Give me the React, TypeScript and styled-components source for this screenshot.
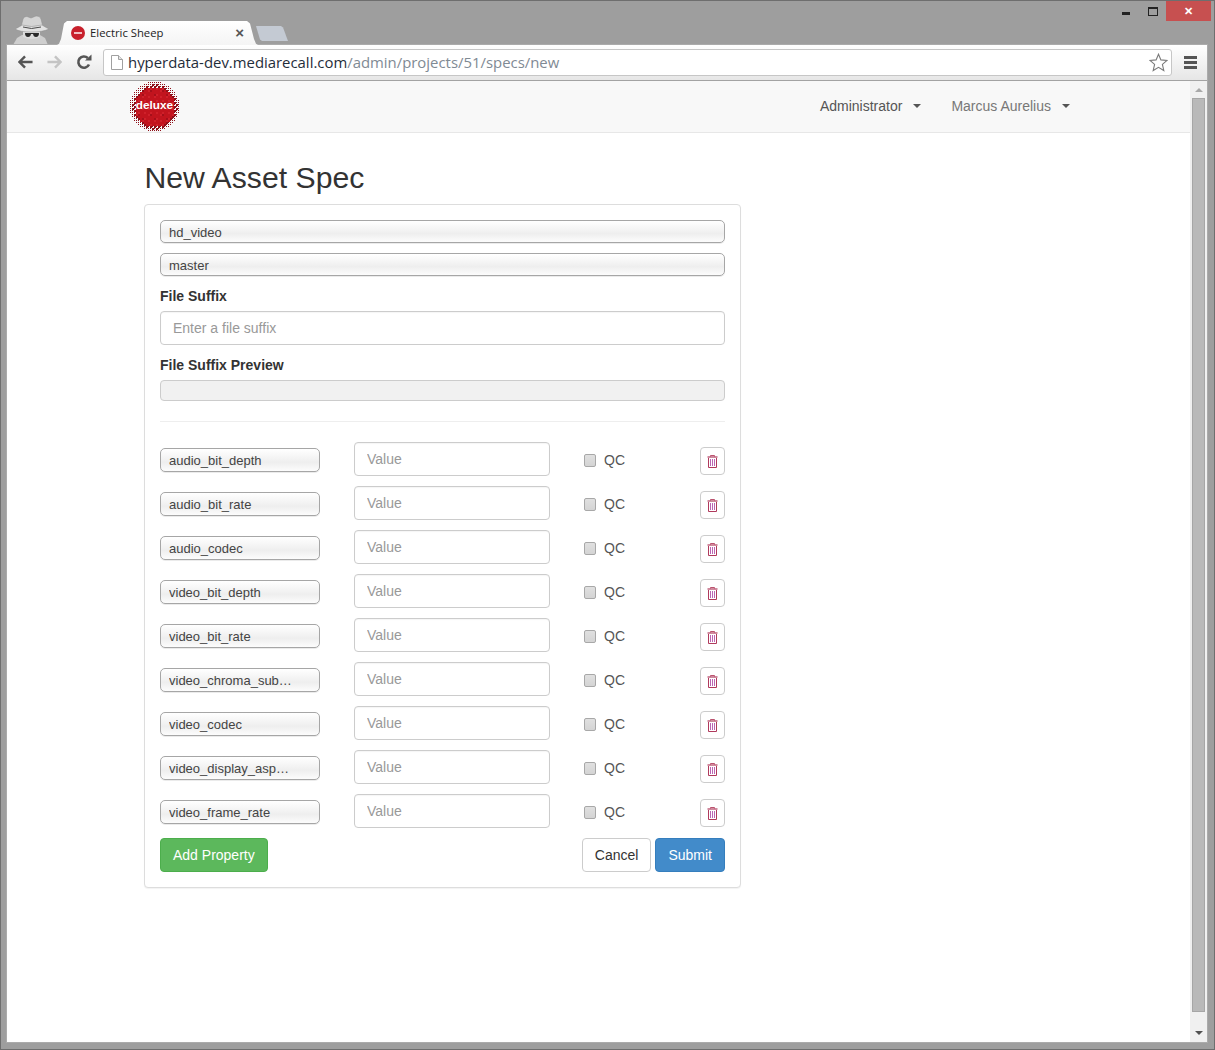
import React from 'react';
import styled, { createGlobalStyle } from 'styled-components';

const properties = [
  'audio_bit_depth',
  'audio_bit_rate',
  'audio_codec',
  'video_bit_depth',
  'video_bit_rate',
  'video_chroma_subsampling',
  'video_codec',
  'video_display_aspect_ratio',
  'video_frame_rate',
];

// halftone dots for the logo, full cells in the middle, single pixels at the rim
const logoDots = (() => {
  const dots: { x: number; y: number; size: number; fill: string }[] = [];
  for (let y = 0; y < 25; y++) {
    for (let x = 0; x < 25; x++) {
      const d = Math.hypot(x * 2 + 1 - 25, y * 2 + 1 - 25);
      if (d > 25) continue;
      const solid = d < 20 || (d < 22.5 && (x + y) % 2 === 0);
      const n = (x * 7 + y * 13 + x * y) % 6;
      const inner = n === 0 ? '#a50f1a' : n === 1 ? '#d0202a' : '#c2141e';
      dots.push({
        x: x * 2,
        y: y * 2,
        size: solid ? 2 : 1,
        fill: d < 20 ? inner : '#8f1019',
      });
    }
  }
  return dots;
})();

function Incognito() {
  return (
    <svg width="36" height="31" viewBox="0 0 36 31">
      <path d="M0 31 L4 24 L9 21 L27 21 L32 24 L35 31 Z" fill="#cfcfcf" />
      <path d="M10 16 H27 V23 Q18 27 10 23 Z" fill="#dcdcdc" />
      <path d="M8 13 L10 5 Q11 2 14 2.5 L18 4 L23 2 Q27 1.5 28 5 L30 13 Z" fill="#d4d4d4" stroke="#8c8c8c" strokeWidth="0.5" />
      <path d="M2 15 Q8 12 9 11 Q18 14 29 11 Q32 13 36 15 Q30 18 18 18 Q7 18 2 15 Z" fill="#e2e2e2" stroke="#8c8c8c" strokeWidth="0.5" />
      <path d="M10 13 Q18 16 28 13" fill="none" stroke="#4a4a4a" strokeWidth="1" />
      <path d="M12 19 H18 Q18 23 15 23 Q12 23 12 19 Z M20 19 H26 Q26 23 23 23 Q20 23 20 19 Z M17 19 H21 V20 H17 Z" fill="#2a2a2a" />
    </svg>
  );
}

function BackIcon({ color }: { color: string }) {
  return (
    <svg width="15" height="14" viewBox="0 0 16 14">
      <path d="M7.5 1 L1.5 7 L7.5 13 M2 7 H15.5" fill="none" stroke={color} strokeWidth="2.6" />
    </svg>
  );
}

function ForwardIcon({ color }: { color: string }) {
  return (
    <svg width="15" height="14" viewBox="0 0 16 14">
      <path d="M8.5 1 L14.5 7 L8.5 13 M14 7 H0.5" fill="none" stroke={color} strokeWidth="2.6" />
    </svg>
  );
}

function ReloadIcon() {
  return (
    <svg width="16" height="16" viewBox="0 0 16 16">
      <path d="M13 10.5 A5.6 5.6 0 1 1 11.8 4" fill="none" stroke="#555" strokeWidth="2.6" />
      <path d="M9 6.6 H15.5 V0.5 Z" fill="#555" />
    </svg>
  );
}

function PageIcon() {
  return (
    <svg width="12" height="15" viewBox="0 0 12 15">
      <path d="M0.5 0.5 H7.5 L11.5 4.5 V14.5 H0.5 Z" fill="#fff" stroke="#a0a0a0" />
      <path d="M7.5 0.5 V4.5 H11.5" fill="#e4e4e4" stroke="#a0a0a0" />
    </svg>
  );
}

function StarIcon() {
  return (
    <svg width="19" height="19" viewBox="0 0 19 19">
      <path d="M9.5 1.2 L11.9 6.9 L18 7.4 L13.4 11.4 L14.8 17.5 L9.5 14.3 L4.2 17.5 L5.6 11.4 L1 7.4 L7.1 6.9 Z" fill="#fff" stroke="#7a7a7a" strokeWidth="1.1" />
    </svg>
  );
}

function TrashIcon() {
  return (
    <svg width="11" height="13" viewBox="0 0 11 13">
      <path d="M3.5 1.5 V0.5 H7.5 V1.5" fill="none" stroke="#b3405f" strokeWidth="0.9" />
      <path d="M0.5 2 H10.5" stroke="#b03a5c" strokeWidth="1.2" />
      <path d="M1.5 3 V12.5 H9.5 V3" fill="none" stroke="#b03a5c" />
      <path d="M3.5 4 V11 M5.5 4 V11 M7.5 4 V11" stroke="#b455ac" strokeWidth="0.9" />
    </svg>
  );
}

function Logo() {
  return (
    <svg width="50" height="50" viewBox="0 0 50 50">
      <g shapeRendering="crispEdges">
        {logoDots.map((d) => (
          <rect key={`${d.x}-${d.y}`} x={d.x} y={d.y} width={d.size} height={d.size} fill={d.fill} />
        ))}
      </g>
      <text x="24.5" y="27" textAnchor="middle" fontFamily="'Liberation Sans', sans-serif" fontWeight="700" fontSize="11.8" fill="#fff">deluxe</text>
    </svg>
  );
}

function PropertyRow({ name }: { name: string }) {
  return (
    <Row>
      <PropertySelect defaultValue={name}>
        <option>{name}</option>
      </PropertySelect>
      <ValueInput placeholder="Value" />
      <QcLabel>
        <QcBox />
        QC
      </QcLabel>
      <DeleteButton>
        <TrashIcon />
      </DeleteButton>
    </Row>
  );
}

export default function App() {
  return (
    <Window>
      <GlobalStyle />
      <TitleStrip>
        <IncognitoSlot>
          <Incognito />
        </IncognitoSlot>
        <Tab>
          <Favicon />
          <TabTitle>Electric Sheep</TabTitle>
          <TabClose>×</TabClose>
        </Tab>
        <NewTab />
        <WindowControls>
          <Minimize />
          <Maximize />
          <CloseWindow>✕</CloseWindow>
        </WindowControls>
      </TitleStrip>
      <Browser>
        <Toolbar>
          <ToolButton>
            <BackIcon color="#555" />
          </ToolButton>
          <ToolButton>
            <ForwardIcon color="#c4c4c4" />
          </ToolButton>
          <ToolButton>
            <ReloadIcon />
          </ToolButton>
          <AddressBar>
            <PageIcon />
            <Url>
              hyperdata-dev.mediarecall.com
              <UrlPath>/admin/projects/51/specs/new</UrlPath>
            </Url>
            <StarSlot>
              <StarIcon />
            </StarSlot>
          </AddressBar>
          <MenuIcon>
            <span />
            <span />
            <span />
          </MenuIcon>
        </Toolbar>
        <Viewport>
          <Page>
            <Navbar>
              <Logo />
              <NavLinks>
                <NavLink $active>
                  Administrator
                  <Caret />
                </NavLink>
                <NavLink>
                  Marcus Aurelius
                  <Caret />
                </NavLink>
              </NavLinks>
            </Navbar>
            <Content>
              <Heading>New Asset Spec</Heading>
              <Panel>
                <FullSelect defaultValue="hd_video">
                  <option>hd_video</option>
                </FullSelect>
                <FullSelect defaultValue="master">
                  <option>master</option>
                </FullSelect>
                <FieldLabel>File Suffix</FieldLabel>
                <TextInput placeholder="Enter a file suffix" />
                <FieldLabel>File Suffix Preview</FieldLabel>
                <PreviewBox />
                <Divider />
                <Rows>
                  {properties.map((name) => (
                    <PropertyRow key={name} name={name} />
                  ))}
                </Rows>
                <Actions>
                  <Button $variant="add">Add Property</Button>
                  <ActionsRight>
                    <Button $variant="default">Cancel</Button>
                    <Button $variant="submit">Submit</Button>
                  </ActionsRight>
                </Actions>
              </Panel>
            </Content>
          </Page>
          <Scrollbar>
            <ArrowUp />
            <Thumb />
            <ArrowDown />
          </Scrollbar>
        </Viewport>
      </Browser>
    </Window>
  );
}

const GlobalStyle = createGlobalStyle`
  html, body {
    margin: 0;
    padding: 0;
    height: 100%;
    overflow: hidden;
  }
  * {
    box-sizing: border-box;
  }
`;

const Window = styled.div`
  width: 1215px;
  height: 1050px;
  display: flex;
  flex-direction: column;
  padding: 0 7px 7px 6px;
  background: #9e9e9e;
  border: 1px solid #6e6e6e;
  font-family: 'Liberation Sans', Arial, sans-serif;
`;

const TitleStrip = styled.div`
  height: 44px;
  display: flex;
  align-items: flex-end;
  flex-shrink: 0;
`;

const IncognitoSlot = styled.div`
  width: 50px;
  padding-left: 6px;
  display: flex;
  align-items: flex-end;
`;

const Tab = styled.div`
  width: 201px;
  height: 24px;
  background: linear-gradient(#ffffff, #f4f4f4);
  clip-path: polygon(0 100%, 2px 95%, 4px 75%, 7px 10%, 10px 0, 190px 0, 193px 10%, 197px 75%, 199px 95%, 201px 100%);
  display: flex;
  align-items: center;
  padding: 0 14px 0 14px;
`;

const Favicon = styled.div`
  width: 14px;
  height: 14px;
  border-radius: 50%;
  background: #c8202c;
  position: relative;
  flex-shrink: 0;
  &::after {
    content: '';
    position: absolute;
    left: 3px;
    right: 3px;
    top: 6px;
    height: 2px;
    background: #f0c0c4;
  }
`;

const TabTitle = styled.span`
  margin: 0 0 2px 5px;
  font-family: 'Open Sans', sans-serif;
  font-size: 11.3px;
  color: #222;
  flex: 1;
`;

const TabClose = styled.span`
  font-size: 15px;
  font-weight: 700;
  line-height: 14px;
  color: #555;
`;

const NewTab = styled.div`
  width: 32px;
  height: 15px;
  margin: 0 0 4px -2px;
  background: #c4cad3;
  clip-path: polygon(0 0, 25px 0, 27px 10%, 32px 100%, 6px 100%, 4px 90%);
`;

const WindowControls = styled.div`
  margin-left: auto;
  margin-right: -4px;
  align-self: flex-start;
  display: flex;
  align-items: flex-start;
`;

const Minimize = styled.div`
  width: 8px;
  height: 3px;
  margin: 11px 18px 0 0;
  background: #222;
`;

const Maximize = styled.div`
  width: 10px;
  height: 9px;
  margin: 6px 8px 0 0;
  border: 1px solid #222;
  border-top-width: 2px;
`;

const CloseWindow = styled.div`
  width: 45px;
  height: 20px;
  background: #c75050;
  color: #fff;
  font-size: 11px;
  font-weight: 700;
  line-height: 20px;
  text-align: center;
`;

const Browser = styled.div`
  flex: 1;
  min-height: 0;
  display: flex;
  flex-direction: column;
  background: #fff;
  box-shadow: 0 0 0 1px #ababab;
`;

const Toolbar = styled.div`
  height: 36px;
  flex-shrink: 0;
  display: flex;
  align-items: center;
  padding: 0 10px 1px 4px;
  background: linear-gradient(#ffffff, #e6e6e6);
  border-bottom: 1px solid #a3a3a3;
  border-radius: 3px 3px 0 0;
`;

const ToolButton = styled.div`
  width: 29px;
  height: 20px;
  display: flex;
  align-items: center;
  justify-content: center;
`;

const AddressBar = styled.div`
  flex: 1;
  height: 27px;
  margin: 0 12px 0 5px;
  display: flex;
  align-items: center;
  padding: 0 3px 0 7px;
  background: #fff;
  border: 1px solid #c6c6c6;
  border-radius: 3px;
`;

const Url = styled.span`
  margin-left: 5px;
  font-family: 'Open Sans', sans-serif;
  font-size: 14.9px;
  color: #1f2d3a;
  white-space: nowrap;
`;

const UrlPath = styled.span`
  color: #7f8a94;
`;

const StarSlot = styled.div`
  margin-left: auto;
  display: flex;
`;

const MenuIcon = styled.div`
  width: 13px;
  display: flex;
  flex-direction: column;
  gap: 2px;
  span {
    display: block;
    height: 3px;
    background: #555;
  }
`;

const Viewport = styled.div`
  flex: 1;
  min-height: 0;
  display: flex;
`;

const Page = styled.div`
  flex: 1;
  min-width: 0;
  background: #fff;
`;

const Navbar = styled.div`
  height: 52px;
  display: flex;
  align-items: center;
  padding: 0 120px 0 123px;
  background: #f8f8f8;
  border-bottom: 1px solid #e7e7e7;
`;

const NavLinks = styled.div`
  margin-left: auto;
  margin-bottom: 2px;
  display: flex;
  gap: 30px;
`;

const NavLink = styled.span<{ $active?: boolean }>`
  font-size: 14px;
  color: ${(p) => (p.$active ? '#555' : '#777')};
  display: flex;
  align-items: center;
`;

const Caret = styled.span`
  width: 0;
  height: 0;
  margin-left: 11px;
  border-top: 4px solid #555;
  border-left: 4px solid transparent;
  border-right: 4px solid transparent;
`;

const Content = styled.div`
  padding: 0 0 0 137px;
  width: 734px;
`;

const Heading = styled.h1`
  margin: 27px 0 8px;
  padding-left: 0.5px;
  font-size: 30.2px;
  font-weight: 500;
  line-height: 36px;
  color: #333;
`;

const Panel = styled.div`
  display: flex;
  flex-direction: column;
  padding: 15px;
  border: 1px solid #ddd;
  border-radius: 4px;
  background: #fff;
  box-shadow: 0 1px 1px rgba(0, 0, 0, 0.05);
`;

const PropertySelect = styled.select`
  appearance: none;
  height: 24px;
  width: 160px;
  padding: 0 26px 0 8px;
  font-family: 'Liberation Sans', Arial, sans-serif;
  font-size: 13px;
  color: #444;
  text-overflow: ellipsis;
  border: 1px solid #a6a6a6;
  border-radius: 5px;
  background: linear-gradient(#ffffff 0%, #f4f4f4 40%, #eeeeee 60%, #fcfcfc 100%);
  box-shadow: 0 1px 0 rgba(0, 0, 0, 0.08);
`;

const FullSelect = styled(PropertySelect)`
  width: 100%;
  height: 23px;
  margin-bottom: 10px;
  padding-top: 2px;
`;

const FieldLabel = styled.label`
  display: block;
  margin-bottom: 5px;
  font-size: 14px;
  line-height: 20px;
  font-weight: 700;
  color: #333;
`;

const TextInput = styled.input`
  width: 100%;
  height: 34px;
  padding: 6px 12px;
  margin-bottom: 10px;
  font-family: 'Liberation Sans', Arial, sans-serif;
  font-size: 14px;
  border: 1px solid #ccc;
  border-radius: 4px;
  background: #fff;
  box-shadow: inset 0 1px 1px rgba(0, 0, 0, 0.04);
  &::placeholder {
    color: #999;
    opacity: 1;
  }
`;

const PreviewBox = styled.div`
  height: 21px;
  background: #f1f1f1;
  border: 1px solid #ccc;
  border-radius: 4px;
`;

const Divider = styled.hr`
  width: 100%;
  margin: 20px 0 21px;
  border: 0;
  border-top: 1px solid #eee;
`;

const Rows = styled.div`
  display: flex;
  flex-direction: column;
  gap: 10px;
`;

const Row = styled.div`
  display: flex;
  align-items: center;
  height: 34px;
`;

const ValueInput = styled(TextInput)`
  width: 196px;
  margin: 0 0 0 34px;
  position: relative;
  top: -1px;
`;

const QcLabel = styled.label`
  display: flex;
  align-items: center;
  margin-left: 34px;
  font-size: 14px;
  color: #555;
`;

const QcBox = styled.input.attrs({ type: 'checkbox' })`
  appearance: none;
  width: 12px;
  height: 13px;
  margin: 0 8px 0 0;
  background: linear-gradient(#e0e0e0, #d4d4d4);
  border: 1px solid #a8a8a8;
  border-radius: 2px;
`;

const DeleteButton = styled.button`
  width: 25px;
  height: 28px;
  margin: 2px 0 0 auto;
  padding: 0;
  display: flex;
  align-items: center;
  justify-content: center;
  background: #fff;
  border: 1px solid #ccc;
  border-radius: 4px;
`;

const Actions = styled.div`
  display: flex;
  justify-content: space-between;
  margin-top: 9px;
`;

const ActionsRight = styled.div`
  display: flex;
  gap: 4px;
`;

const buttonColors = {
  add: { bg: '#5cb85c', border: '#4cae4c', fg: '#fff' },
  submit: { bg: '#428bca', border: '#357ebd', fg: '#fff' },
  default: { bg: '#fff', border: '#ccc', fg: '#333' },
};

const Button = styled.button<{ $variant: 'add' | 'submit' | 'default' }>`
  height: 34px;
  padding: 6px 12px;
  font-family: 'Liberation Sans', Arial, sans-serif;
  font-size: 14px;
  background: ${(p) => buttonColors[p.$variant].bg};
  color: ${(p) => buttonColors[p.$variant].fg};
  border: 1px solid ${(p) => buttonColors[p.$variant].border};
  border-radius: 4px;
`;

const Scrollbar = styled.div`
  width: 17px;
  flex-shrink: 0;
  display: flex;
  flex-direction: column;
  align-items: center;
  background: #f0f0f0;
`;

const ArrowUp = styled.div`
  width: 0;
  height: 0;
  margin: 7px 0 6px;
  border-bottom: 4px solid #a8a8a8;
  border-left: 4px solid transparent;
  border-right: 4px solid transparent;
`;

const Thumb = styled.div`
  width: 13px;
  height: 914px;
  flex-shrink: 0;
  background: #b9b9b9;
  border: 1px solid #a6a6a6;
`;

const ArrowDown = styled.div`
  width: 0;
  height: 0;
  margin-top: 19px;
  border-top: 4px solid #505050;
  border-left: 4px solid transparent;
  border-right: 4px solid transparent;
`;
